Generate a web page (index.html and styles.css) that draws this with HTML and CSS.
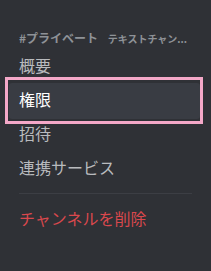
FILE: index.html
```html
<!DOCTYPE html>
<html lang="ja">
<head>
    <meta charset="UTF-8">
    <meta name="viewport" content="width=device-width, initial-scale=1.0">
    <title>チャンネル設定</title>
    <link rel="stylesheet" href="styles.css">
</head>
<body>
    <div class="sidebar">
        <div class="sidebar-header">
            <span class="channel-name">#プライベート</span>
            <span class="channel-type">テキストチャン...</span>
        </div>

        <div class="item">概要</div>
        <div class="item selected">権限</div>
        <div class="item">招待</div>
        <div class="item">連携サービス</div>

        <div class="separator"></div>

        <div class="item danger">チャンネルを削除</div>
    </div>
</body>
</html>
```

FILE: styles.css
```css
/* General page styles */
body {
    margin: 0;
    padding: 0;
    background-color: #2f3136;
    font-family: "Noto Sans CJK JP", "Noto Sans", sans-serif;
}

/* Settings sidebar */
.sidebar {
    width: 191px;
    padding: 26px 0 0 9px;
}

.sidebar-header {
    height: 20px;
    line-height: 20px;
    padding: 0 10px;
    margin-bottom: 3px;
    color: #8e9297;
    font-weight: bold;
    white-space: nowrap;
}

.channel-name {
    font-size: 12px;
}

.channel-type {
    font-size: 10px;
    margin-left: 6px;
}

.item {
    height: 32px;
    line-height: 32px;
    padding: 0 10px;
    margin-bottom: 2px;
    border-radius: 3px;
    font-size: 16px;
    color: #b9bbbe;
}

.item.selected {
    position: relative;
    height: 36px;
    margin-bottom: -2px;
    background-color: #393c43;
    color: #ffffff;
}

/* pink highlight frame drawn over the selected row */
.item.selected::after {
    content: '';
    position: absolute;
    top: -6px;
    bottom: -5px;
    left: -4px;
    right: -3px;
    border: 3px solid #f4a8c8;
}

.separator {
    height: 1px;
    margin: 10px 8px 8px 10px;
    background-color: #3c3e44;
}

.item.danger {
    color: #d9484d;
}
```
